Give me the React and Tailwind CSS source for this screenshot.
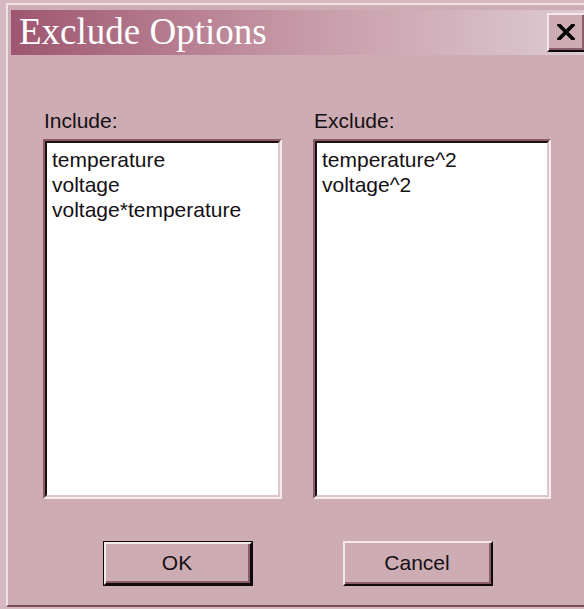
const includeItems = ['temperature', 'voltage', 'voltage*temperature'];
const excludeItems = ['temperature^2', 'voltage^2'];

function ListField({ label, items }) {
  return (
    <div className="flex flex-col">
      <div className="h-[25px] leading-[25px] text-[21px] text-[#141014] pl-[1px]">{label}</div>
      <div className="mt-[6px] h-[360px] border-2 border-t-[#8a5a69] border-l-[#8a5a69] border-b-[#f5ebee] border-r-[#f5ebee]">
        <div className="h-full border-2 border-t-[#1b1014] border-l-[#1b1014] border-b-[#dcc5cb] border-r-[#dcc5cb] bg-white pl-[5px] pt-[4px]">
          {items.map((item) => (
            <div key={item} className="h-[25px] leading-[25px] text-[21px] text-[#141014] whitespace-nowrap">
              {item}
            </div>
          ))}
        </div>
      </div>
    </div>
  );
}

function DialogButton({ children, isDefault }) {
  const face = (
    <div className="h-full border-2 border-t-[#f3e8eb] border-l-[#f3e8eb] border-b-[#0e0a0c] border-r-[#0e0a0c]">
      <div className="h-full flex items-center justify-center border-b-2 border-r-2 border-b-[#8b5c6b] border-r-[#8b5c6b] text-[21px] text-[#141014]">
        {children}
      </div>
    </div>
  );
  if (isDefault) {
    return <div className="w-[150px] h-[45px] border-[1.5px] border-[#0e0a0c]">{face}</div>;
  }
  return <div className="w-[150px] h-[45px]">{face}</div>;
}

export default function App() {
  return (
    <div className="w-[584px] h-[609px] overflow-hidden bg-[#d6b9c0] font-['Liberation_Sans',Arial,sans-serif]">
      <div className="ml-[6px] mt-[3px] h-[604px] bg-[#ceacb3] border-l-2 border-t-2 border-l-[#efe2e6] border-t-[#efe2e6] border-b-2 border-b-[#7a4858] pl-[3px] pt-[5px] flex flex-col">
        {/* title bar */}
        <div className="h-[45px] flex items-center justify-between bg-gradient-to-r from-[#9e5670] via-[#c699a7] to-[#ddcbd1] pl-[8px]">
          <span className="text-white text-[37px] leading-none font-['Liberation_Serif','Times_New_Roman',serif] -mt-[2px]">
            Exclude Options
          </span>
          <div className="w-[39px] h-[39px] mr-[-2px] bg-[#ceacb3] border-2 border-t-[#f3e8eb] border-l-[#f3e8eb] border-b-[#0e0a0c] border-r-[#0e0a0c]">
            <div className="h-full flex items-center justify-center border-b-2 border-r-2 border-b-[#8b5c6b] border-r-[#8b5c6b]">
              <svg width="18" height="16" viewBox="0 0 18 16">
                <path d="M2 1 L16 15 M16 1 L2 15" stroke="#000" strokeWidth="3.6" strokeLinecap="square" />
              </svg>
            </div>
          </div>
        </div>

        <div className="pl-[32px] pt-[53px] grid grid-cols-[239px_238px] gap-x-[31px]">
          <ListField label="Include:" items={includeItems} />
          <ListField label="Exclude:" items={excludeItems} />
        </div>

        <div className="pl-[92px] mt-[42px] flex gap-[90px]">
          <DialogButton isDefault>OK</DialogButton>
          <DialogButton>Cancel</DialogButton>
        </div>
      </div>
    </div>
  );
}
